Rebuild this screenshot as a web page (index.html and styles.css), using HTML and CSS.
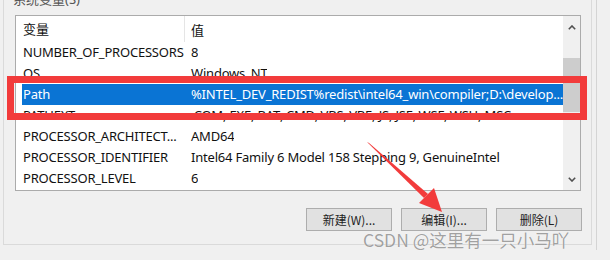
FILE: index.html
```html
<!DOCTYPE html>
<html lang="zh-CN">
<head>
    <meta charset="UTF-8">
    <title>系统变量</title>
    <link rel="stylesheet" href="styles.css">
</head>
<body>
    <div class="window">
        <div class="group">
            <div class="legend">系统变量(S)</div>

            <!-- variable list -->
            <div class="list">
                <div class="list-main">
                    <div class="list-head">
                        <div class="cell name">变量</div>
                        <div class="cell value">值</div>
                    </div>
                    <div class="row"><div class="cell name">NUMBER_OF_PROCESSORS</div><div class="cell value">8</div></div>
                    <div class="row"><div class="cell name">OS</div><div class="cell value">Windows_NT</div></div>
                    <div class="row selected"><div class="cell name">Path</div><div class="cell value">%INTEL_DEV_REDIST%redist\intel64_win\compiler;D:\develop...</div></div>
                    <div class="row"><div class="cell name">PATHEXT</div><div class="cell value">.COM;.EXE;.BAT;.CMD;.VBS;.VBE;.JS;.JSE;.WSF;.WSH;.MSC</div></div>
                    <div class="row"><div class="cell name">PROCESSOR_ARCHITECT...</div><div class="cell value">AMD64</div></div>
                    <div class="row"><div class="cell name">PROCESSOR_IDENTIFIER</div><div class="cell value">Intel64 Family 6 Model 158 Stepping 9, GenuineIntel</div></div>
                    <div class="row"><div class="cell name">PROCESSOR_LEVEL</div><div class="cell value">6</div></div>
                </div>
                <div class="scrollbar">
                    <div class="sb-btn">
                        <svg width="8" height="5" viewBox="0 0 8 5"><polyline points="0.8,4.2 4,1 7.2,4.2" fill="none" stroke="#505050" stroke-width="1.6"/></svg>
                    </div>
                    <div class="sb-track">
                        <div class="sb-thumb"></div>
                    </div>
                    <div class="sb-btn">
                        <svg width="8" height="5" viewBox="0 0 8 5"><polyline points="0.8,0.8 4,4 7.2,0.8" fill="none" stroke="#505050" stroke-width="1.6"/></svg>
                    </div>
                </div>
            </div>

            <div class="buttons">
                <button>新建(W)...</button>
                <button>编辑(I)...</button>
                <button>删除(L)</button>
            </div>
        </div>
    </div>

    <!-- annotations drawn over the screenshot -->
    <div class="mark"></div>
    <svg class="arrow" width="610" height="260" viewBox="0 0 610 260">
        <polygon points="367,142 369,143 428,194 424,198" fill="#f23b3b"/>
        <polygon points="442,212 419,203 434,188" fill="#f23b3b"/>
    </svg>
    <div class="watermark">CSDN @这里有一只小马吖</div>
</body>
</html>
```

FILE: styles.css
```css
body {
    margin: 0;
    width: 610px;
    height: 260px;
    overflow: hidden;
    position: relative;
    background: #f0f0f0;
    font-family: "Noto Sans", "Noto Sans CJK SC", sans-serif;
    font-size: 13px;
    color: #111;
}
.window {
    width: 597px;
    height: 260px;
    border-right: 1px solid #d4d4d4;
    box-sizing: border-box;
    padding-left: 3px;
}
.group {
    width: 589px;
    height: 255px;
    border: 1px solid #dadada;
    border-top: none;
    box-sizing: border-box;
    padding-left: 11px;
}
.legend {
    height: 15px;
    margin-top: -10px;
    margin-left: -2px;
    line-height: 18px;
    color: #555;
}
.list {
    width: 566px;
    height: 176px;
    margin-top: 10px;
    border: 1px solid #ababab;
    box-sizing: border-box;
    background: #fff;
    display: flex;
    overflow: hidden;
}
.list-main {
    flex: 1;
    overflow: hidden;
}
.list-head {
    display: flex;
    height: 26px;
    align-items: center;
}
.list-head .name {
    width: 161px;
    margin-left: 6px;
    padding-left: 1px;
    border-right: 1px solid #e5e5e5;
    height: 26px;
    line-height: 26px;
}
.list-head .value {
    padding-left: 6px;
}
.row {
    display: flex;
    height: 21px;
    line-height: 21px;
    margin-left: 6px;
    white-space: nowrap;
    letter-spacing: -0.2px;
}
.row .name {
    width: 161px;
    padding-left: 1px;
    flex-shrink: 0;
    overflow: hidden;
}
.row .value {
    padding-left: 7px;
    overflow: hidden;
}
.row.selected {
    background: #0a74d4;
    color: #fff;
}
.scrollbar {
    width: 17px;
    display: flex;
    flex-direction: column;
    background: #f0f0f0;
}
.sb-btn {
    height: 22px;
    display: flex;
    align-items: center;
    justify-content: center;
}
.sb-track {
    flex: 1;
    padding-top: 20px;
}
.sb-thumb {
    height: 54px;
    background: #cdcdcd;
}
.buttons {
    display: flex;
    gap: 9px;
    margin-top: 17px;
    margin-left: 291px;
}
button {
    width: 86px;
    height: 23px;
    padding: 0;
    background: #e1e1e1;
    border: 1px solid #adadad;
    font-family: "Noto Sans CJK SC", sans-serif;
    font-size: 12px;
    color: #222;
}
.mark {
    position: absolute;
    left: 7px;
    top: 76px;
    width: 580px;
    height: 44px;
    border: 7px solid #f23b3b;
    box-sizing: border-box;
}
.arrow {
    position: absolute;
    left: 0;
    top: 0;
}
.watermark {
    position: absolute;
    left: 363px;
    top: 228px;
    font-family: "Noto Sans CJK SC", sans-serif;
    font-size: 17.5px;
    line-height: 24px;
    color: rgba(120, 120, 120, 0.7);
    text-shadow: 0 0 1px #fff;
}
```
